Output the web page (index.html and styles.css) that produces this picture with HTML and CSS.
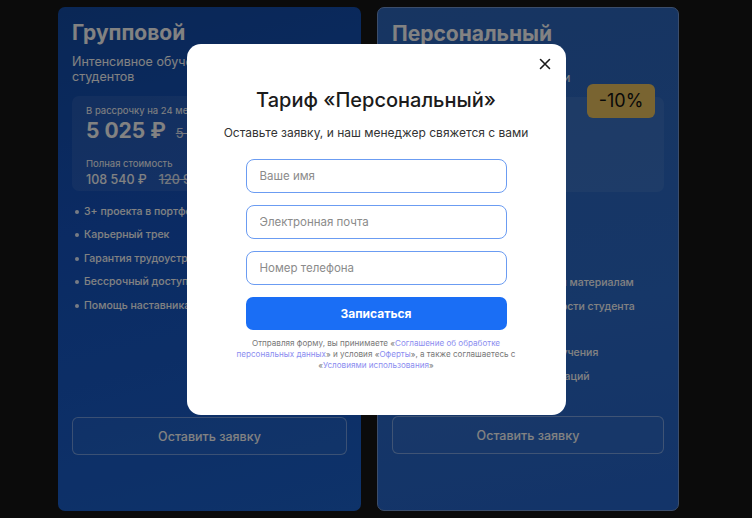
FILE: index.html
```html
<!DOCTYPE html>
<html lang="ru">
<head>
<meta charset="utf-8">
<link rel="stylesheet" href="styles.css">
</head>
<body>
<div class="page">
  <section class="card card-group">
    <h2 class="card-title">Групповой</h2>
    <p class="card-sub">Интенсивное обучение в группе до 20 студентов</p>
    <div class="price-box">
      <div class="price-label">В рассрочку на 24 месяца</div>
      <div class="price-main"><span class="price-now">5 025 ₽</span><span class="price-old">5 590 ₽</span></div>
      <div class="price-label full">Полная стоимость</div>
      <div class="price-full"><span>108 540 ₽</span><span class="price-old-sm">120 960 ₽</span></div>
    </div>
    <ul class="features">
      <li>3+ проекта в портфолио</li>
      <li>Карьерный трек</li>
      <li>Гарантия трудоустройства</li>
      <li>Бессрочный доступ к материалам</li>
      <li>Помощь наставника</li>
    </ul>
    <button class="card-btn">Оставить заявку</button>
  </section>
  <section class="card card-personal">
    <h2 class="card-title">Персональный</h2>
    <p class="card-sub">Индивидуальное обучение<br>с наставником и кураторами</p>
    <div class="badge">-10%</div>
    <div class="price-box">
      <div class="price-label">В рассрочку на 24 месяца</div>
      <div class="price-main"><span class="price-now">8 990 ₽</span><span class="price-old">9 990 ₽</span></div>
      <div class="price-label full">Полная стоимость</div>
      <div class="price-full"><span>194 160 ₽</span><span class="price-old-sm">215 760 ₽</span></div>
    </div>
    <ul class="features">
      <li>3+ проекта в портфолио</li>
      <li>Карьерный трек</li>
      <li>Гарантия трудоустройства</li>
      <li>Бессрочный доступ к учебным материалам</li>
      <li>Гибкий график с учётом занятости студента</li>
      <li>Помощь наставника</li>
      <li>Личный куратор на период обучения</li>
      <li>Серия персональных консультаций</li>
    </ul>
    <button class="card-btn">Оставить заявку</button>
  </section>
</div>

<div class="overlay">
  <div class="modal">
    <button class="close" aria-label="Закрыть">
      <svg width="12" height="12" viewBox="0 0 12 12"><path d="M1.5 1.5 L10.5 10.5 M10.5 1.5 L1.5 10.5" stroke="#1b1b1b" stroke-width="1.6" stroke-linecap="round"/></svg>
    </button>
    <h1 class="modal-title">Тариф «Персональный»</h1>
    <p class="modal-sub">Оставьте заявку, и наш менеджер свяжется с вами</p>
    <form class="form">
      <input class="field" type="text" placeholder="Ваше имя">
      <input class="field" type="email" placeholder="Электронная почта">
      <input class="field" type="tel" placeholder="Номер телефона">
      <button class="submit" type="button">Записаться</button>
    </form>
    <p class="legal">Отправляя форму, вы принимаете «<a href="#">Соглашение об обработке персональных данных</a>» и условия «<a href="#">Оферты</a>», а также соглашаетесь с «<a href="#">Условиями использования</a>»</p>
  </div>
</div>
</body>
</html>
```

FILE: styles.css
```css
* { box-sizing: border-box; }
html, body { margin: 0; padding: 0; }
body {
  background: #151515;
  font-family: Inter, "Noto Sans", sans-serif;
  width: 752px;
  height: 518px;
  overflow: hidden;
}
.page {
  display: flex;
  gap: 16px;
  padding: 7px 0 0 58px;
}
.card {
  position: relative;
  height: 504px;
  border-radius: 7px;
  padding: 13px 14px 56px;
  display: flex;
  flex-direction: column;
  color: #f0f0f0;
}
.card-group {
  width: 303px;
  background: linear-gradient(165deg, #13499f 0%, #1550b8 40%, #1a5ec4 100%);
}
.card-personal {
  width: 302px;
  background: linear-gradient(170deg, #2b62b4 0%, #2a66c0 60%, #2360c2 100%);
  border: 1px solid #6d8fc6;
}
.card-title {
  margin: 0;
  font-size: 21px;
  line-height: 26px;
  font-weight: 700;
}
.card-sub {
  margin: 8px 0 0;
  font-size: 12.5px;
  line-height: 15px;
}
.price-box {
  margin-top: 12px;
  height: 95px;
  border-radius: 7px;
  background: rgba(255,255,255,0.07);
  padding: 9px 14px 0;
}
.price-label {
  font-size: 9.5px;
  line-height: 12px;
}
.price-label.full { margin-top: 14px; }
.price-main {
  display: flex;
  align-items: baseline;
  gap: 10px;
  margin-top: 1px;
}
.price-now {
  font-size: 21px;
  line-height: 26px;
  font-weight: 700;
}
.price-old {
  font-size: 13px;
  text-decoration: line-through;
  opacity: 0.85;
}
.price-full {
  display: flex;
  gap: 12px;
  font-size: 12.5px;
  line-height: 16px;
  margin-top: 2px;
  font-weight: 500;
}
.price-old-sm { text-decoration: line-through; opacity: 0.85; }
.features {
  list-style: none;
  margin: 9px 0 0;
  padding: 0 0 0 3px;
}
.features li {
  position: relative;
  padding-left: 9px;
  font-size: 10.5px;
  line-height: 23.4px;
  font-weight: 500;
  white-space: nowrap;
}
.features li::before {
  content: "";
  position: absolute;
  left: 0;
  top: 10px;
  width: 4px;
  height: 4px;
  border-radius: 50%;
  background: #fff;
  opacity: 0.85;
}
.card-btn {
  margin-top: auto;
  height: 38px;
  width: 100%;
  border-radius: 6px;
  border: 1px solid rgba(255,255,255,0.35);
  background: rgba(255,255,255,0.03);
  color: #f0f0f0;
  font-family: inherit;
  font-size: 12.5px;
  font-weight: 500;
}
.badge {
  position: absolute;
  top: 76px;
  right: 23px;
  width: 68px;
  height: 34px;
  border-radius: 6px;
  background: #dfb95c;
  color: #111;
  font-size: 18px;
  line-height: 34px;
  text-align: center;
}
.overlay {
  position: fixed;
  inset: 0;
  background: rgba(0,0,0,0.46);
  display: flex;
  justify-content: center;
  align-items: flex-start;
  padding-top: 44px;
}
.modal {
  position: relative;
  width: 379px;
  height: 371px;
  background: #fff;
  border-radius: 14px;
  padding: 43px 0 0;
  text-align: center;
  color: #1b1b1b;
}
.close {
  position: absolute;
  top: 14px;
  right: 15px;
  width: 12px;
  height: 12px;
  padding: 0;
  border: 0;
  background: none;
  display: block;
}
.close svg { display: block; }
.modal-title {
  margin: 0;
  font-size: 20px;
  line-height: 26px;
  font-weight: 500;
}
.modal-sub {
  margin: 12px 0 0;
  font-size: 12px;
  line-height: 16px;
  color: #333;
}
.form {
  margin: 18px auto 0;
  width: 261px;
  display: flex;
  flex-direction: column;
  gap: 12px;
}
.field {
  height: 34px;
  width: 100%;
  border: 1px solid #6b9cf2;
  border-radius: 8px;
  padding: 0 13px;
  font-family: inherit;
  font-size: 11.5px;
  color: #222;
  outline: none;
}
.field::placeholder { color: #8b8b8b; }
.submit {
  height: 33px;
  width: 100%;
  border: 0;
  border-radius: 7px;
  background: #1a6ef5;
  color: #fff;
  font-family: inherit;
  font-size: 12px;
  font-weight: 700;
}
.legal {
  margin: 8px auto 0;
  width: 280px;
  font-size: 8.1px;
  line-height: 11px;
  color: #777;
}
.legal a { color: #8b8df0; text-decoration: none; }
```
